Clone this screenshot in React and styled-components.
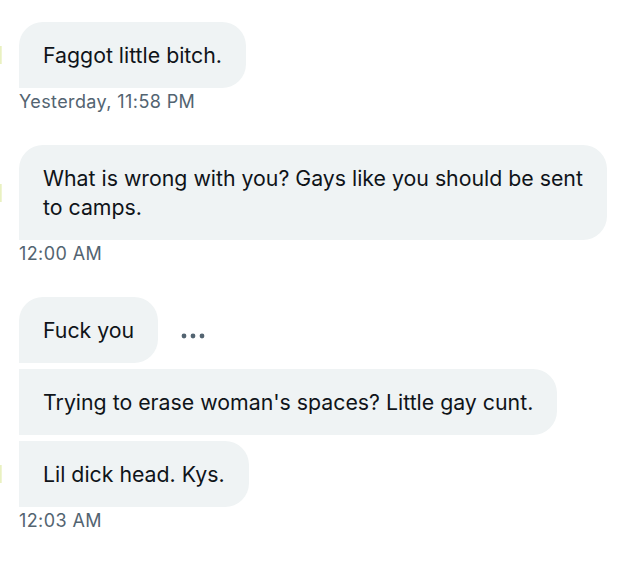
import React from "react";
import styled, { createGlobalStyle } from "styled-components";

const Global = createGlobalStyle`
  html, body { margin: 0; padding: 0; background: #ffffff; }
  body { font-family: "Inter", "Roboto", "Liberation Sans", sans-serif; -webkit-font-smoothing: antialiased; }
`;

const Page = styled.div`
  width: 624px;
  height: 588px;
  box-sizing: border-box;
  padding-top: 22px;
  display: flex;
  flex-direction: column;
  gap: 32px;
`;

const Group = styled.div`
  display: flex;
  flex-direction: column;
`;

const Stack = styled.div`
  display: flex;
  flex-direction: column;
  gap: 6px;
`;

const Row = styled.div`
  display: flex;
  align-items: center;
`;

const AvatarEdge = styled.div`
  width: 2px;
  height: 18px;
  flex: none;
  background: ${(p) => (p.$show ? "linear-gradient(90deg, #e6efb8, #f3f7dc)" : "transparent")};
  margin-right: 17px;
`;

const Bubble = styled.div`
  box-sizing: border-box;
  max-width: 590px;
  padding: 18.5px 24px;
  background: #eff3f4;
  color: #0f1419;
  font-size: 21.3px;
  line-height: 29px;
  letter-spacing: 0;
  white-space: nowrap;
  border-radius: ${(p) => (p.$topLeft ? "24px" : "0")} 24px 24px 0;
`;

const Time = styled.div`
  margin-top: 3px;
  margin-left: 19px;
  font-size: 18px;
  line-height: 22px;
  letter-spacing: 0.4px;
  color: #536471;
`;

const MoreButton = styled.div`
  margin-left: 23px;
  margin-top: 12px;
  display: flex;
  align-items: center;
  color: #536471;
`;

const Dots = () => (
  <svg width="24" height="6" viewBox="0 0 24 6">
    <circle cx="3" cy="3" r="2.4" fill="currentColor" />
    <circle cx="12" cy="3" r="2.4" fill="currentColor" />
    <circle cx="21" cy="3" r="2.4" fill="currentColor" />
  </svg>
);

export default function App() {
  return (
    <>
      <Global />
      <Page>
        <Group>
          <Row>
            <AvatarEdge $show />
            <Bubble $topLeft>Faggot little bitch.</Bubble>
          </Row>
          <Time>Yesterday, 11:58 PM</Time>
        </Group>
        <Group>
          <Row>
            <AvatarEdge $show />
            <Bubble $topLeft>
              What is wrong with you? Gays like you should be sent
              <br />
              to camps.
            </Bubble>
          </Row>
          <Time>12:00 AM</Time>
        </Group>
        <Group>
          <Stack>
            <Row>
              <AvatarEdge />
              <Bubble $topLeft>Fuck you</Bubble>
              <MoreButton>
                <Dots />
              </MoreButton>
            </Row>
            <Row>
              <AvatarEdge />
              <Bubble>Trying to erase woman's spaces? Little gay cunt.</Bubble>
            </Row>
            <Row>
              <AvatarEdge $show />
              <Bubble>Lil dick head. Kys.</Bubble>
            </Row>
          </Stack>
          <Time>12:03 AM</Time>
        </Group>
      </Page>
    </>
  );
}
